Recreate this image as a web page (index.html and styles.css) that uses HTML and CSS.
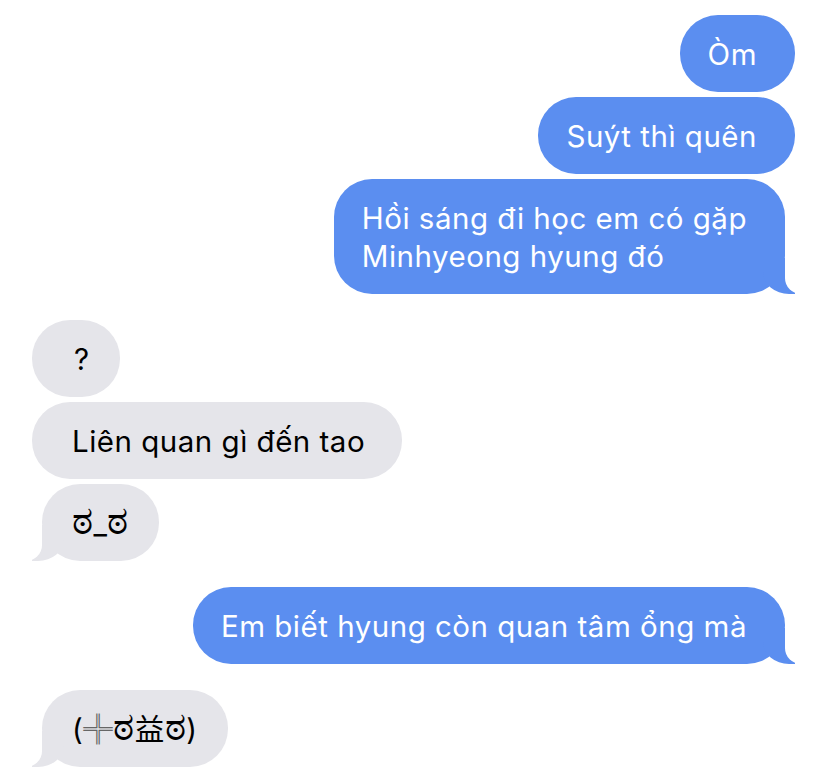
FILE: index.html
```html
<!DOCTYPE html>
<html lang="vi">
<head>
  <meta charset="UTF-8" />
  <meta name="viewport" content="width=device-width, initial-scale=1.0"/>
  <title>Tin nhắn</title>
  <link rel="stylesheet" href="styles.css">
</head>
<body>

  <div class="chat">
    <!-- Tin nhắn gửi đi -->
    <div class="group me">
      <div class="bubble">Òm</div>
      <div class="bubble">Suýt thì quên</div>
      <div class="bubble tail">Hồi sáng đi học em có gặp<br>Minhyeong hyung đó</div>
    </div>

    <!-- Tin nhắn nhận -->
    <div class="group them">
      <div class="bubble q">?</div>
      <div class="bubble">Liên quan gì đến tao</div>
      <div class="bubble tail face"><span class="eye">ಠ</span>_<span class="eye">ಠ</span></div>
    </div>

    <div class="group me">
      <div class="bubble tail">Em biết hyung còn quan tâm ổng mà</div>
    </div>

    <div class="group them">
      <div class="bubble tail face">(<span class="cross">╬</span><span class="eye">ಠ</span>益<span class="eye">ಠ</span>)</div>
    </div>
  </div>

</body>
</html>
```

FILE: styles.css
```css
html, body {
  margin: 0;
  padding: 0;
  background-color: #ffffff;
  font-family: Inter, "Noto Sans", "Noto Sans CJK SC", sans-serif;
}

.chat {
  width: 828px;
  padding-top: 15px;
  display: flex;
  flex-direction: column;
  gap: 26px;
}

.group {
  display: flex;
  flex-direction: column;
  gap: 5px;
}

.bubble {
  position: relative;
  padding: 19.5px 38px 19.5px 28px;
  line-height: 38px;
  font-size: 29.5px;
  letter-spacing: 0.5px;
  border-radius: 38px;
  white-space: nowrap;
}

.me {
  align-items: flex-end;
  padding-right: 33px;
}

.me .bubble {
  background-color: #5b8ef0;
  color: #ffffff;
}

.them {
  align-items: flex-start;
  padding-left: 32px;
}

.them .bubble {
  background-color: #e5e5ea;
  color: #000000;
  padding: 19.5px 37px 19.5px 40px;
}

.them .bubble.q {
  padding: 19.5px 30px 19.5px 42px;
}

.them .bubble.face {
  padding: 19.5px 30px 19.5px 30px;
}

.eye {
  font-size: 40px;
  line-height: 0;
}

.cross {
  color: #666666;
  font-weight: 300;
}

/* colas de burbuja */
.bubble.tail::before,
.bubble.tail::after {
  content: "";
  position: absolute;
  bottom: 0;
  height: 36px;
}

.me .bubble.tail {
  margin-right: 10px;
}

.me .bubble.tail::before {
  right: -10px;
  width: 32px;
  background-color: #5b8ef0;
  border-bottom-left-radius: 26px 22px;
}

.me .bubble.tail::after {
  right: -42px;
  width: 42px;
  background-color: #ffffff;
  border-bottom-left-radius: 16px;
}

.them .bubble.tail {
  margin-left: 10px;
}

.them .bubble.tail::before {
  left: -10px;
  width: 32px;
  background-color: #e5e5ea;
  border-bottom-right-radius: 26px 22px;
}

.them .bubble.tail::after {
  left: -42px;
  width: 42px;
  background-color: #ffffff;
  border-bottom-right-radius: 16px;
}
```
